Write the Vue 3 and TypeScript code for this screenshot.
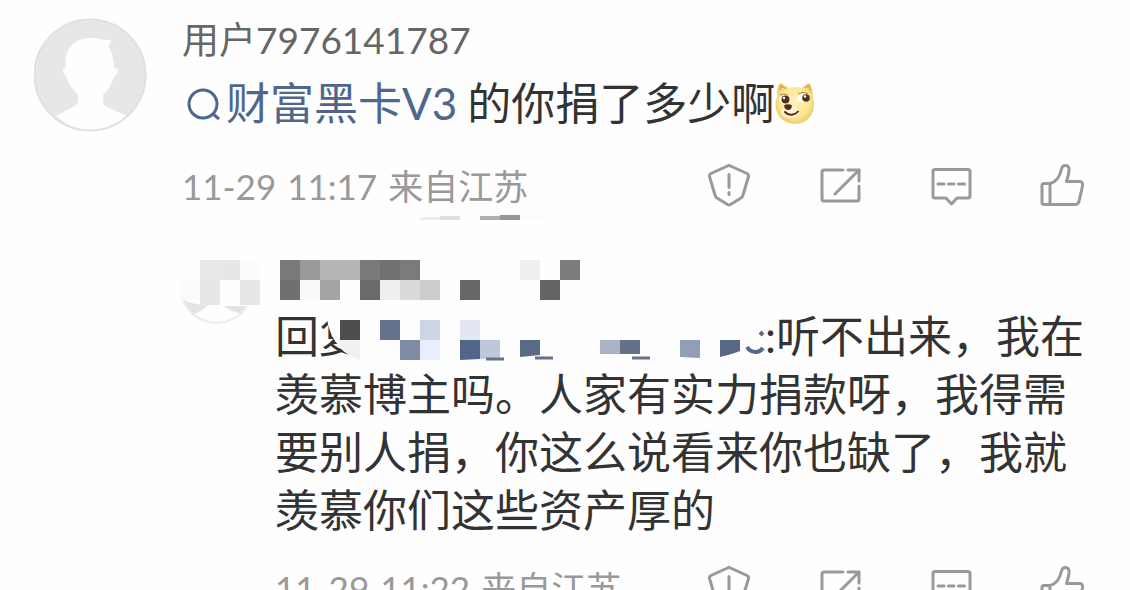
<script setup lang="ts">
interface Action {
  name: string
  paths: string[]
}

interface Tile {
  x: number
  y: number
  w: number
  h: number
  fill: string
}

const tile = (x: number, y: number, fill: string, h = 20, w = 20): Tile => ({ x, y, w, h, fill })

const actions: Action[] = [
  {
    name: '举报',
    paths: [
      'M20.5 2 Q22 1 23.5 2 L40 9.5 Q42 10.5 41.5 12.5 L36 31 Q35.500 33 34 34 L23.500 40.500 Q22 41.500 20.500 40.500 L10 34 Q8.500 33 8 31 L2.500 12.500 Q2 10.500 4 9.500 Z',
      'M22 10.500 V23.500',
      'M22 28.500 V30.500',
    ],
  },
  {
    name: '转发',
    paths: [
      'M25 6 H6 Q4 6 4 8 V35 Q4 37 6 37 H39 Q41 37 41 35 V22',
      'M30 6 H41 V17',
      'M41 6 L17 30',
    ],
  },
  {
    name: '评论',
    paths: [
      'M6 5.500 H39 Q41 5.500 41 7.500 V32 Q41 34 39 34 H28 L22.500 40 L17 34 H6 Q4 34 4 32 V7.500 Q4 5.500 6 5.500 Z',
      'M9 20 H15 M19.500 20 H25 M29.500 20 H35.500',
    ],
  },
  {
    name: '赞',
    paths: [
      'M10 19.500 H4 Q2 19.500 2 21.500 V38.500 Q2 40.500 4 40.500 H35 Q38 40.500 39 37.500 L42.500 22 Q43 17.500 40 17.500 H26.500 C28 12 29.500 8 29 4.500 C28 0.500 22.500 0.500 21.500 5 C20 12 16 18 10 19.500 V40.500',
    ],
  },
]

const stripTiles: Tile[] = [
  tile(0, 3, '#eeeeee', 3),
  tile(20, 2, '#dedede', 4),
  tile(60, 2, '#b0b0b0', 4),
  tile(80, 1, '#969696', 5),
  tile(100, 1, '#fafafa', 4),
]

const avatarTiles: Tile[] = [
  tile(20, 0, '#e8e8e8'),
  tile(40, 0, '#e7e7e7'),
  tile(60, 0, '#fcfcfc'),
  tile(0, 20, '#fbfbfb'),
  tile(20, 20, '#e6e6e6', 25),
  tile(60, 20, '#e6e6e6', 25),
]

const nameTiles: Tile[] = [
  tile(0, 0, '#797979'),
  tile(20, 0, '#9a9a9a'),
  tile(40, 0, '#b6b6b6', 20, 40),
  tile(80, 0, '#7a7a7a'),
  tile(100, 0, '#717171'),
  tile(120, 0, '#7b7b7b'),
  tile(240, 0, '#efefef'),
  tile(280, 0, '#7c7c7c'),
  tile(0, 20, '#707070'),
  tile(20, 20, '#f9f9f9'),
  tile(40, 20, '#a5a5a5'),
  tile(80, 20, '#6a6a6a'),
  tile(100, 20, '#eeeeee'),
  tile(120, 20, '#dadada'),
  tile(140, 20, '#cccccc'),
  tile(180, 20, '#666666'),
  tile(260, 20, '#656565'),
]
</script>

<template>
  <main class="thread">
    <article class="comment">
      <svg class="avatar" viewBox="0 0 114 114" role="img" aria-label="用户头像">
        <circle cx="56" cy="57" r="55.500" fill="#e7e7e7" />
        <path
          d="M22 98 Q31 93 41 88 Q45 85 44 77 C38 72 34 64 32 58 Q28 55 29 51 L32 50 C29 28 43 19 60 20 Q68 22 77 22 Q76 27 74 28 C79 35 80 42 80 50 L84 51 Q84 56 80 59 C78 66 74 72 69 77 V84 Q70 88 75 90 L93 98 Q78 113 57 112 Q36 112 22 98 Z"
          fill="#fefefe"
        />
        <circle cx="56" cy="57" r="55.500" fill="none" stroke="#e0e0e0" stroke-width="2" />
      </svg>

      <div class="body">
        <h2 class="name">用户7976141787</h2>
        <p class="text">
          <a class="topic" href="#"><svg class="search" viewBox="0 0 44 44" aria-hidden="true">
            <circle cx="21" cy="23" r="14" />
            <path d="M31 33 L37 38" />
          </svg>财富黑卡V3</a><span class="said">的你捐了多少啊</span><svg class="doge" viewBox="0 0 42 44" role="img" aria-label="doge">
            <defs>
              <radialGradient id="fur" cx="50%" cy="46%" r="55%">
                <stop offset="0" stop-color="#fff2bc" />
                <stop offset=".7" stop-color="#fbe58e" />
                <stop offset="1" stop-color="#eecb6c" />
              </radialGradient>
            </defs>
            <path d="M2 16 Q2 7 4 3 Q6 1 9 4 L14 7 Q20 5 26 7 L32 3 Q35 1 36 5 Q38 10 38 16 C42 29 35 43 20 43 C5 43 -3 29 2 16 Z" fill="url(#fur)" />
            <path d="M5 9 Q5 6 6 5 Q9 6 11 8 M30 7 Q32 5 34 5 Q35 7 35 10" fill="none" stroke="#d9a750" stroke-width="1.500" />
            <ellipse cx="10" cy="18.500" rx="6" ry="4.500" fill="#fffdf0" />
            <ellipse cx="28" cy="17" rx="6.500" ry="4.500" fill="#fffdf0" />
            <circle cx="10.500" cy="18.500" r="4" fill="#54301d" />
            <circle cx="31" cy="17" r="3.800" fill="#54301d" />
            <circle cx="9" cy="17" r="1.200" fill="#fff" />
            <circle cx="30" cy="15.500" r="1.200" fill="#fff" />
            <path d="M5 14 Q9 12 13 14 M23 13 Q28 10 33 12.500" fill="none" stroke="#b38440" stroke-width="1" />
            <ellipse cx="15" cy="31" rx="9" ry="6" fill="#fff4cd" />
            <path d="M9 24.500 Q13 22 17 24.500 Q16.500 29 13 29 Q9.500 28.500 9 24.500 Z" fill="#54281a" />
            <path d="M10 31 Q13 34.500 18 33.500 Q21 33 23 30.500" fill="none" stroke="#592c1c" stroke-width="2" stroke-linecap="round" />
          </svg>
        </p>

        <footer class="meta">
          <time>11-29</time><time>11:17</time><span class="place">来自江苏</span>
          <div class="actions">
            <button v-for="a in actions" :key="a.name" type="button" :aria-label="a.name">
              <svg viewBox="0 0 44 44" aria-hidden="true">
                <path v-for="p in a.paths" :key="p" :d="p" />
              </svg>
            </button>
          </div>
        </footer>

        <svg class="strip" viewBox="0 0 120 6" aria-hidden="true">
          <rect v-for="(t, i) in stripTiles" :key="i" :x="t.x" :y="t.y" :width="t.w" :height="t.h" :fill="t.fill" />
        </svg>

        <article class="reply">
          <svg class="small-avatar" viewBox="0 0 80 66" aria-hidden="true">
            <path d="M3 40 Q14 45 28 45 Q24 50 14 54 Q7 49 3 40 Z" fill="#e4e4e4" />
            <path d="M43 46 H67 Q66 50 62 54 Q50 51 43 46 Z" fill="#e4e4e4" />
            <path d="M3 40 A36 36 0 0 0 67 46" fill="none" stroke="#ececec" stroke-width="2" />
            <rect v-for="(t, i) in avatarTiles" :key="i" :x="t.x" :y="t.y" :width="t.w" :height="t.h" :fill="t.fill" />
          </svg>

          <div class="reply-body">
            <svg class="hidden-name" viewBox="0 0 300 40" aria-hidden="true">
              <rect v-for="(t, i) in nameTiles" :key="i" :x="t.x" :y="t.y" :width="t.w" :height="t.h" :fill="t.fill" />
            </svg>
            <div class="quote">
              <p class="text">回复<a class="mention" href="#" aria-label="用户"></a>:听不出来，我在羡慕博主吗。人家有实力捐款呀，我得需要别人捐，你这么说看来你也缺了，我就羡慕你们这些资产厚的</p>
              <svg class="cover" viewBox="0 0 500 58" aria-hidden="true">
                <path d="M51 4 Q53 29 66 41 Q74 49 92 54 H490 V4 Z" fill="#fefefe" />
                <rect x="65" y="13" width="20" height="20" fill="#4d4d4d" />
                <path d="M65 33 H85 V53 Q73 49 65 41 Z" fill="#f1f1f1" />
                <rect x="105" y="13" width="20" height="20" fill="#64748f" />
                <rect x="145" y="13" width="20" height="20" fill="#cdd5e3" />
                <rect x="185" y="13" width="20" height="20" fill="#e2e7f1" />
                <rect x="125" y="33" width="20" height="20" fill="#7d8ba5" />
                <rect x="145" y="33" width="20" height="20" fill="#e8effc" />
                <path d="M185 33 H205 V52 L185 53 Z" fill="#52658a" />
                <path d="M205 33 H225 V51 L205 52 Z" fill="#bfc8da" />
                <path d="M245 33 H265 V48 L245 50 Z" fill="#5a6b88" />
                <rect x="325" y="33" width="20" height="14" fill="#a9b4c5" />
                <rect x="345" y="33" width="20" height="14" fill="#647188" />
                <path d="M405 33 H425 V51 L405 50 Z" fill="#919fb6" />
                <path d="M445 33 H465 V44 Q458 47 445 50 Z" fill="#586986" />
                <path d="M211 52 H229 M260 51 H278 M357 51 H375" fill="none" stroke="#64728a" stroke-width="3" />
                <path d="M472 40 Q475 45 481 45 Q485 45 488 41" fill="none" stroke="#52688c" stroke-width="4" />
                <path d="M485 25 L488 28" fill="none" stroke="#52688c" stroke-width="4" />
              </svg>
            </div>
            <footer class="meta">
              <time>11-29</time><time>11:22</time><span class="place">来自江苏</span>
              <div class="actions">
                <button v-for="a in actions" :key="a.name" type="button" :aria-label="a.name">
                  <svg viewBox="0 0 44 44" aria-hidden="true">
                    <path v-for="p in a.paths" :key="p" :d="p" />
                  </svg>
                </button>
              </div>
            </footer>
          </div>
        </article>
      </div>
    </article>
  </main>
</template>

<style>
body {
  margin: 0;
  background: #fefefe;
}
</style>

<style scoped>
.thread {
  box-sizing: border-box;
  height: 100vh;
  overflow: hidden;
  padding: 18px 0 0 34px;
  font-family: Lato, "Noto Sans CJK SC", sans-serif;
  color: #333;
}

svg {
  display: block;
}

.comment {
  display: flex;
  gap: 34px;
}

.avatar {
  flex: none;
  width: 114px;
  height: 114px;
}

.body {
  flex: 1;
  min-width: 0;
}

.name {
  margin: 0;
  font-size: 37px;
  font-weight: 400;
  line-height: 44px;
  color: #666;
}

.text {
  margin: 0;
  font-size: 44px;
  line-height: 58px;
}

.body > .text {
  display: flex;
  align-items: center;
  margin-top: 12px;
}

.topic {
  display: flex;
  align-items: center;
  color: #50678c;
  text-decoration: none;
}

.search {
  width: 44px;
  height: 44px;
  fill: none;
  stroke: currentColor;
  stroke-width: 3;
}

.said {
  margin-left: 10px;
}

.doge {
  width: 42px;
  height: 44px;
}

.meta {
  display: flex;
  align-items: center;
  gap: 11px;
  height: 44px;
  padding-right: 46px;
  font-size: 35px;
  line-height: 44px;
  color: #999;
}

.body > .meta {
  margin-top: 32px;
}

.actions {
  display: flex;
  gap: 67px;
  margin-left: auto;
}

.actions button {
  width: 44px;
  height: 44px;
  padding: 0;
  border: 0;
  background: none;
  color: #999;
}

.actions svg {
  width: 44px;
  height: 44px;
  fill: none;
  stroke: currentColor;
  stroke-width: 3;
  stroke-linecap: round;
  stroke-linejoin: round;
}

.strip {
  width: 120px;
  height: 6px;
  margin: 6px 0 40px 238px;
}

.reply {
  display: flex;
  gap: 14px;
}

.small-avatar {
  flex: none;
  width: 80px;
  height: 66px;
  margin-left: -2px;
}

.reply-body {
  flex: 1;
  min-width: 0;
}

.hidden-name {
  width: 300px;
  height: 40px;
  margin-left: 6px;
}

.quote {
  position: relative;
  margin: 7px 40px 0 1px;
}

.mention {
  display: inline-block;
  width: 402px;
  height: 40px;
  vertical-align: middle;
}

.cover {
  position: absolute;
  top: 0;
  left: 0;
  width: 500px;
  height: 58px;
}

.reply-body > .meta {
  margin-top: 27px;
  margin-left: 1px;
}
</style>
